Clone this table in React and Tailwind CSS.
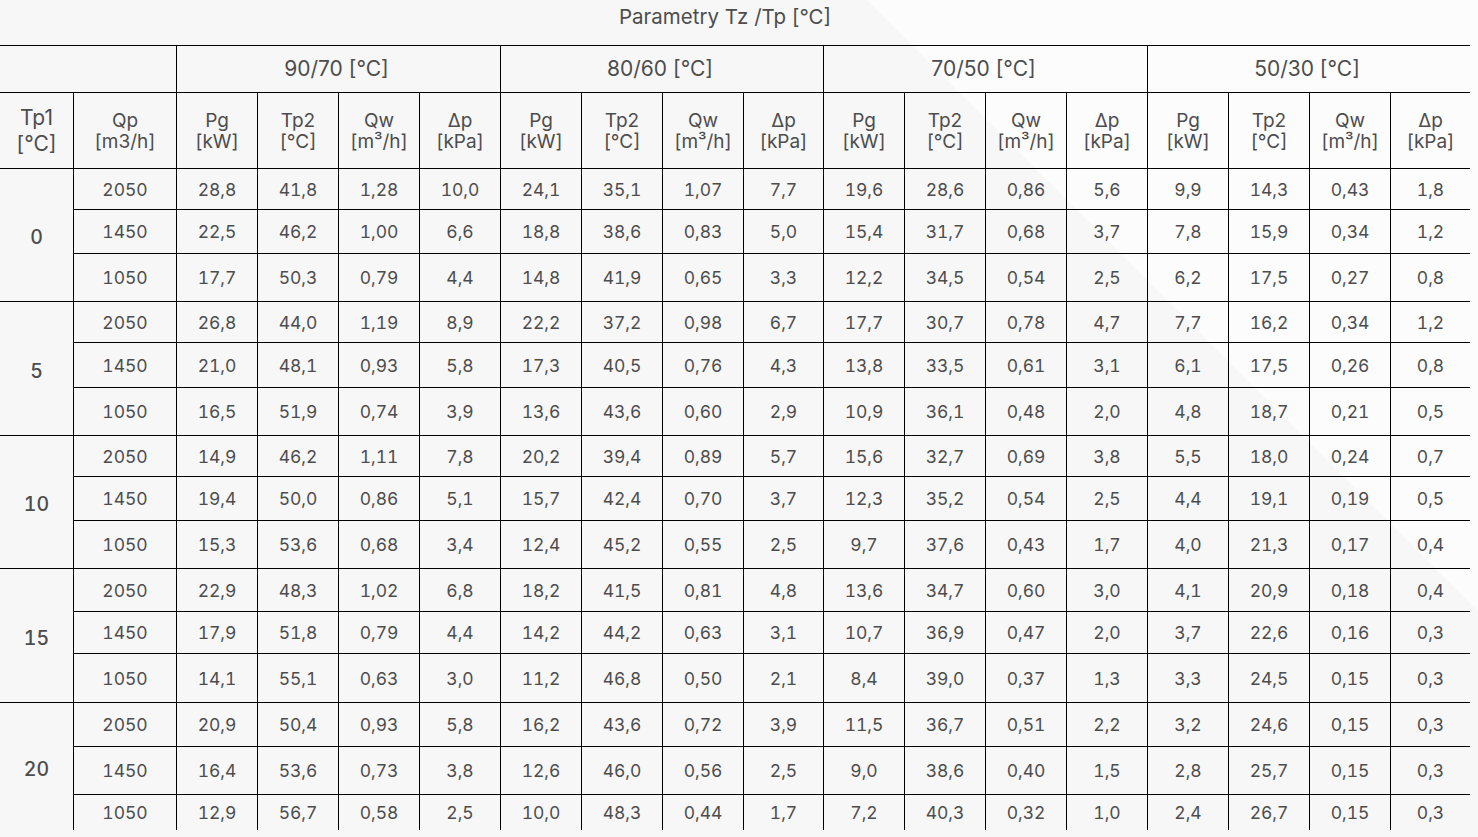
import React from "react";

const groups = [
  {
    tp: "0",
    rows: [
      ["2050", "28,8 41,8 1,28 10,0 24,1 35,1 1,07 7,7 19,6 28,6 0,86 5,6 9,9 14,3 0,43 1,8"],
      ["1450", "22,5 46,2 1,00 6,6 18,8 38,6 0,83 5,0 15,4 31,7 0,68 3,7 7,8 15,9 0,34 1,2"],
      ["1050", "17,7 50,3 0,79 4,4 14,8 41,9 0,65 3,3 12,2 34,5 0,54 2,5 6,2 17,5 0,27 0,8"],
    ],
  },
  {
    tp: "5",
    rows: [
      ["2050", "26,8 44,0 1,19 8,9 22,2 37,2 0,98 6,7 17,7 30,7 0,78 4,7 7,7 16,2 0,34 1,2"],
      ["1450", "21,0 48,1 0,93 5,8 17,3 40,5 0,76 4,3 13,8 33,5 0,61 3,1 6,1 17,5 0,26 0,8"],
      ["1050", "16,5 51,9 0,74 3,9 13,6 43,6 0,60 2,9 10,9 36,1 0,48 2,0 4,8 18,7 0,21 0,5"],
    ],
  },
  {
    tp: "10",
    rows: [
      ["2050", "14,9 46,2 1,11 7,8 20,2 39,4 0,89 5,7 15,6 32,7 0,69 3,8 5,5 18,0 0,24 0,7"],
      ["1450", "19,4 50,0 0,86 5,1 15,7 42,4 0,70 3,7 12,3 35,2 0,54 2,5 4,4 19,1 0,19 0,5"],
      ["1050", "15,3 53,6 0,68 3,4 12,4 45,2 0,55 2,5 9,7 37,6 0,43 1,7 4,0 21,3 0,17 0,4"],
    ],
  },
  {
    tp: "15",
    rows: [
      ["2050", "22,9 48,3 1,02 6,8 18,2 41,5 0,81 4,8 13,6 34,7 0,60 3,0 4,1 20,9 0,18 0,4"],
      ["1450", "17,9 51,8 0,79 4,4 14,2 44,2 0,63 3,1 10,7 36,9 0,47 2,0 3,7 22,6 0,16 0,3"],
      ["1050", "14,1 55,1 0,63 3,0 11,2 46,8 0,50 2,1 8,4 39,0 0,37 1,3 3,3 24,5 0,15 0,3"],
    ],
  },
  {
    tp: "20",
    rows: [
      ["2050", "20,9 50,4 0,93 5,8 16,2 43,6 0,72 3,9 11,5 36,7 0,51 2,2 3,2 24,6 0,15 0,3"],
      ["1450", "16,4 53,6 0,73 3,8 12,6 46,0 0,56 2,5 9,0 38,6 0,40 1,5 2,8 25,7 0,15 0,3"],
      ["1050", "12,9 56,7 0,58 2,5 10,0 48,3 0,44 1,7 7,2 40,3 0,32 1,0 2,4 26,7 0,15 0,3"],
    ],
  },
];

const bg =
  "bg-[linear-gradient(45deg,#f7f7f7_73.6%,#fcfcfc_73.6%)] bg-fixed";

const cell = `${bg} flex items-center justify-center text-center`;

const groupHeads = ["90/70 [°C]", "80/60 [°C]", "70/50 [°C]", "50/30 [°C]"];
const subHeads = [
  ["Pg", "[kW]"],
  ["Tp2", "[°C]"],
  ["Qw", "[m³/h]"],
  ["Δp", "[kPa]"],
];

export default function App() {
  return (
    <div
      className={`${bg} w-[1478px] h-[837px] overflow-hidden text-[#4d4d4d]`}
      style={{ fontFamily: "Inter, 'Liberation Sans', sans-serif" }}
    >
      <div className="w-[1470px] h-[46px] border-b border-black flex justify-center pr-[20px] pt-[5px] text-[20.5px] leading-[24px]">
        Parametry Tz /Tp [°C]
      </div>
      <div className="w-[1470px] grid gap-px bg-black grid-cols-[73px_102px_80px_80px_80px_80px_80px_80px_80px_79px_80px_80px_80px_80px_80px_80px_80px_79px] grid-rows-[46px_75px_40px_43px_47px_40px_44px_47px_40px_43px_47px_42px_41px_48px_43px_47px_35px]">
        <div className={`${cell} col-span-2`} />
        {groupHeads.map((g) => (
          <div key={g} className={`${cell} col-span-4 text-[21px] pr-[4px]`}>
            {g}
          </div>
        ))}
        <div className={`${cell} flex-col text-[21px] leading-[26px]`}>
          <span>Tp1</span>
          <span>[°C]</span>
        </div>
        <div className={`${cell} flex-col text-[19px] leading-[21px]`}>
          <span>Qp</span>
          <span>[m3/h]</span>
        </div>
        {groupHeads.map((g) =>
          subHeads.map(([a, b]) => (
            <div key={g + a} className={`${cell} flex-col text-[19px] leading-[21px]`}>
              <span>{a}</span>
              <span>{b}</span>
            </div>
          ))
        )}
        {groups.map((grp) => (
          <React.Fragment key={grp.tp}>
            <div className={`${cell} row-span-3 pt-[6px] text-[19.5px] font-medium tabular-nums`}>
              {grp.tp}
            </div>
            {grp.rows.map(([qp, vals]) => (
              <React.Fragment key={qp}>
                <div className={`${cell} pt-[2px] text-[17.5px] tabular-nums`}>{qp}</div>
                {vals.split(" ").map((v, i) => (
                  <div key={i} className={`${cell} pt-[2px] text-[17.5px] tabular-nums`}>
                    {v}
                  </div>
                ))}
              </React.Fragment>
            ))}
          </React.Fragment>
        ))}
      </div>
    </div>
  );
}
